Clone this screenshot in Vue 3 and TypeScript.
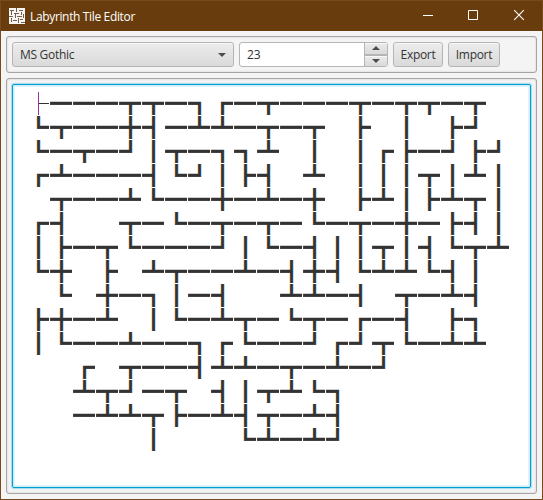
<script setup lang="ts">
import { ref } from 'vue'

const fontName = ref('MS Gothic')
const fontSize = ref(23)

const rows: string[] = [
  '├━━━┳┳━┓┏━┳━━━┳━┳┳━┳　',
  '┗┳━━╋┫━┻┻━┳━┳　┣　┃　┣┛　',
  '┗━┳━┛┃┳━┓┓┻　┃　┃┏┣━┛┣┛',
  '┏┻━━━┫┗┛┃┣┫　┻　┃┃┃┳┃┻┃',
  '　┳━━┻┗━━╋━┻━╋　┣┻┃┣┻┳┃',
  '┏┫　　┳━┗━┳━┳━┗━┳━╋━┣┫┃',
  '┃┣━┳┗━━━┛┃┗━┫┃┃┳┃┫┗┳┻',
  '┗╋　┣　┻┳━━┻━┫╋┫┗┻┻┗┫┃　',
  '　┗　╋━┓┃━┫　　┻┻━┫　┳━┻┫　',
  '┣╋━┻　┃┗━┻┳━┗┳━┏━┫　┣┓　',
  '┃┗━━┻━━┓┏┗━━┛┏┛┳┗━┻┻　',
  '　　┏　┳━━┫┻┻━┳━┻━┛　　　　　',
  '　　┻┳┛━┳　┫┃┳┻┗┓　　　　　　　',
  '　　━┻┻┳┣━┻┫┳━┻┫　　　　　　　',
  '　　　　　┃　　　┗┻━┻┛　　　　　　　',
]
const cells: string[] = rows.flatMap((row) => [...row])
</script>

<template>
  <div class="window">
    <header class="titlebar">
      <svg class="logo" width="16" height="16" viewBox="0 0 16 16" shape-rendering="crispEdges">
        <rect width="16" height="16" fill="#f7f4f1" />
        <path
          d="M1 2.5h4M7.5 0v4M10 2.5h4M2.5 3v4M5 5.5h5M12.5 4v3M0 8.5h4M6.500 6v4M8 8.500h5M14.500 6v4M2.500 10v4M4 12.500h4M9.500 10v5M11 11.500h3M12 14.500h4"
          stroke="#6f5f50"
          fill="none"
        />
      </svg>
      <span class="title">Labyrinth Tile Editor</span>
      <div class="controls">
        <svg width="46" height="30" viewBox="0 0 46 30"><path d="M19 14.5h10" stroke="#fff" /></svg>
        <svg width="46" height="30" viewBox="0 0 46 30"><path d="M18.5 9.5h9v9h-9z" stroke="#fff" fill="none" /></svg>
        <svg width="46" height="30" viewBox="0 0 46 30"><path d="M18.2 9.2l9.600 9.600M27.800 9.200l-9.600 9.600" stroke="#fff" stroke-width="1.1" /></svg>
      </div>
    </header>

    <main class="content">
      <section class="panel toolbar">
        <button class="control combo">
          <span class="combo-label">{{ fontName }}</span>
          <svg width="8" height="4" viewBox="0 0 8 4"><path d="M0 0h8L4 4z" fill="#4d4d4d" /></svg>
        </button>
        <div class="spinner">
          <span class="value">{{ fontSize }}</span>
          <div class="steps">
            <button class="step"><svg width="8" height="4" viewBox="0 0 8 4"><path d="M0 4h8L4 0z" fill="#4d4d4d" /></svg></button>
            <button class="step"><svg width="8" height="4" viewBox="0 0 8 4"><path d="M0 0h8L4 4z" fill="#4d4d4d" /></svg></button>
          </div>
        </div>
        <button class="control export">Export</button>
        <button class="control import">Import</button>
      </section>

      <section class="panel editor">
        <div class="textarea">
          <div class="maze">
            <span v-for="(c, i) in cells" :key="i" class="cell" :class="{ thin: c === '├' }">{{ c }}</span>
          </div>
        </div>
      </section>
    </main>
  </div>
</template>

<style>
body {
  margin: 0;
  overflow: hidden;
}
</style>

<style scoped>
.window {
  box-sizing: border-box;
  width: 543px;
  height: 500px;
  border: 1px solid #7b4a1c;
  background: #f4f4f4;
  display: flex;
  flex-direction: column;
  font-family: 'Open Sans', 'Noto Sans', sans-serif;
  font-size: 12px;
  color: #333;
}
.titlebar {
  height: 30px;
  flex: none;
  display: flex;
  align-items: center;
  padding-left: 8px;
  background: #693c0d;
  color: #fff;
}
.logo {
  margin-right: 5px;
}
.title {
  letter-spacing: -0.35px;
  white-space: nowrap;
}
.controls {
  display: flex;
  margin-left: auto;
}
.content {
  flex: 1;
  display: flex;
  flex-direction: column;
  gap: 5px;
  padding: 5px;
}
.panel {
  box-sizing: border-box;
  border: 1px solid #a5a5a5;
  border-radius: 3px;
  padding: 5px;
  box-shadow: inset 0 0 2px #c4c4c4;
}
.toolbar {
  height: 37px;
  width: 531px;
  display: flex;
  gap: 5px;
}
.control,
.step {
  box-sizing: border-box;
  margin: 0;
  border: 1px solid #b5b5b5;
  background: linear-gradient(#ececec, #dadada);
  box-shadow: inset 0 1px #f8f8f8;
  font: inherit;
  color: inherit;
  padding: 0;
}
.control {
  height: 25px;
  border-radius: 3px;
  letter-spacing: -0.3px;
}
.combo {
  width: 222px;
  display: flex;
  align-items: center;
  justify-content: space-between;
  padding: 0 7px;
}
.export {
  width: 50px;
}
.import {
  width: 52px;
}
.spinner {
  box-sizing: border-box;
  width: 149px;
  height: 25px;
  display: flex;
  border: 1px solid #b5b5b5;
  border-radius: 3px;
  background: #fff;
  overflow: hidden;
}
.value {
  flex: 1;
  padding-left: 7px;
  line-height: 23px;
  letter-spacing: -0.2px;
}
.steps {
  width: 24px;
  margin: -1px -1px -1px 0;
  display: flex;
  flex-direction: column;
}
.step {
  flex: 1;
  display: flex;
  align-items: center;
  justify-content: center;
}
.editor {
  width: 531px;
  height: 416px;
}
.textarea {
  box-sizing: border-box;
  width: 519px;
  height: 404px;
  border: 1px solid #039ed3;
  border-radius: 2px;
  background: #fff;
  box-shadow: inset 0 0 0 1px #cdeef7, inset 0 0 0 2px #e0f4f9, 0 0 1px 1px #a5dbec;
  padding: 7px 14px;
}
.maze {
  display: grid;
  grid-template-columns: repeat(21, 22px);
  grid-auto-rows: 23px;
  gap: 1px;
  font-family: 'Noto Sans CJK JP', monospace;
  font-size: 23px;
  line-height: 20px;
}
.cell {
  overflow: hidden;
  white-space: pre;
  -webkit-text-stroke: 0.3px #333;
}
.thin {
  color: transparent;
  -webkit-text-stroke: 0;
  background: linear-gradient(to right, #8a1f8f 0 12px, #333 12px);
  background-clip: text;
  -webkit-background-clip: text;
}
</style>
